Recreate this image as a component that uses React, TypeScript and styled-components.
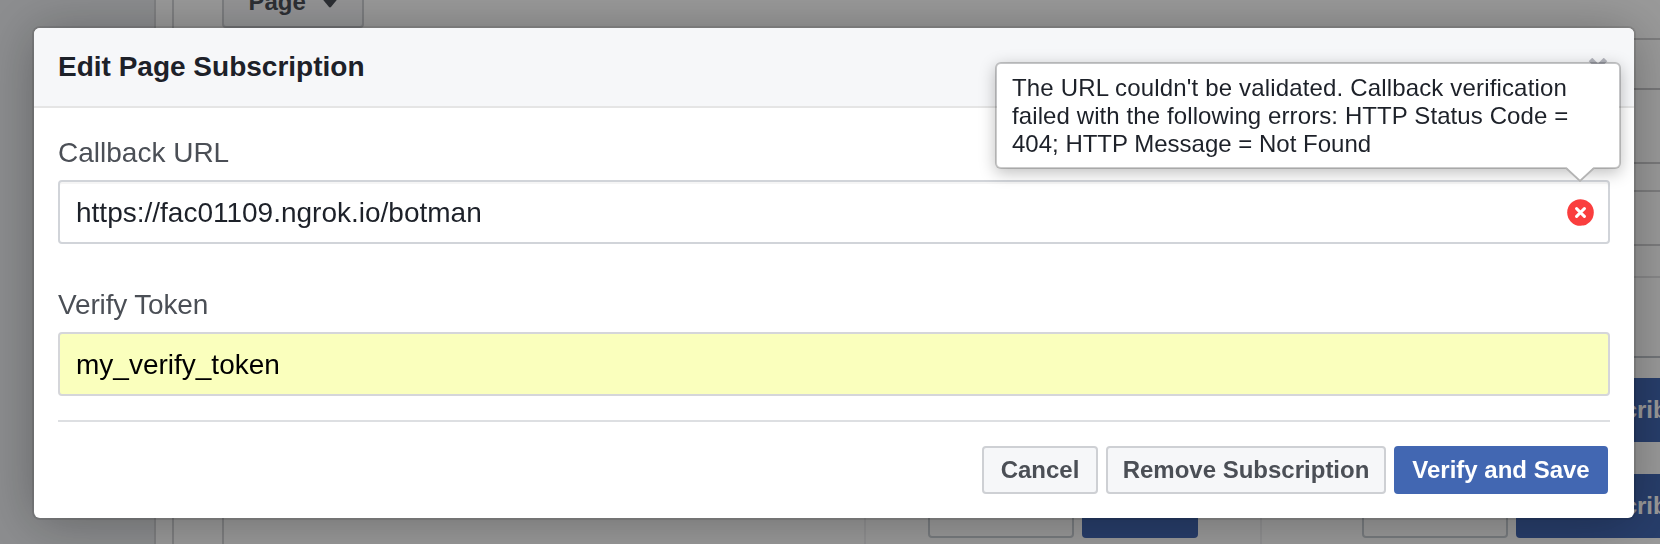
import React from "react";
import styled, { createGlobalStyle } from "styled-components";

const GlobalStyle = createGlobalStyle`
  *, *::before, *::after { box-sizing: border-box; }
  body {
    margin: 0;
    overflow: hidden;
    background: #fff;
    font-family: "Liberation Sans", Helvetica, Arial, sans-serif;
    color: #1d2129;
  }
`;

/* Page behind the dialog */

const Page = styled.div`
  display: flex;
  width: 1660px;
  height: 544px;
  overflow: hidden;
`;

const Sidebar = styled.aside`
  flex: 0 0 156px;
  background: #e9ebee;
  border-right: 2px solid #d3d4d7;
`;

const Main = styled.main`
  flex: 1;
  min-width: 0;
  margin-left: 16px;
  padding-left: 48px;
  border-left: 2px solid #d3d4d7;
`;

const Panel = styled.section`
  display: flex;
  flex-direction: column;
  height: 544px;
`;

const PanelTop = styled.div`
  flex: 0 0 38px;
`;

const ObjectSelect = styled.div`
  display: flex;
  align-items: center;
  gap: 14px;
  width: 142px;
  height: 50px;
  margin-top: -22px;
  padding: 0 0 3px 24.5px;
  border: 2px solid #ced0d4;
  border-radius: 4px;
  background: #f6f7f9;
  color: #4b4f56;
  font-size: 24px;
  font-weight: bold;
`;

const Row = styled.div<{ $height: number; $line: string }>`
  flex: 0 0 ${(p) => p.$height}px;
  display: flex;
  border-top: 2px solid ${(p) => p.$line};
  border-left: 2px solid #d3d4d7;
`;

const ButtonRow = styled.div<{ $height: number }>`
  flex: 0 0 ${(p) => p.$height}px;
  display: flex;
  border-left: 2px solid #d3d4d7;
`;

const Cell = styled.div<{ $width: number; $last?: boolean }>`
  display: flex;
  flex: 0 0 ${(p) => p.$width}px;
  justify-content: ${(p) => (p.$last ? "flex-start" : "flex-end")};
  gap: 8px;
  padding: ${(p) => (p.$last ? "0 0 0 100px" : "0 62px 0 0")};
  border-right: 2px solid #f0f0f2;
`;

const GhostSelect = styled.div`
  flex: none;
  width: 146px;
  height: 64px;
  border: 2px solid #c8ced4;
  border-radius: 4px;
`;

const SolidAction = styled.div<{ $width: number }>`
  flex: none;
  display: flex;
  align-items: center;
  width: ${(p) => p.$width}px;
  height: 64px;
  padding-left: 49px;
  border-radius: 4px;
  background: #4267b2;
  color: #fff;
  font-size: 24px;
  font-weight: bold;
`;

/* Dialog */

const Overlay = styled.div`
  position: fixed;
  inset: 0;
  display: flex;
  align-items: flex-start;
  padding: 28px 26px 0 34px;
  background: rgba(0, 0, 0, 0.4);
`;

const Dialog = styled.div`
  flex: 1;
  height: 490px;
  border-radius: 6px;
  background: #fff;
  box-shadow: 0 4px 52px rgba(0, 0, 0, 0.3), 0 0 0 2px rgba(0, 0, 0, 0.1);
`;

const DialogHeader = styled.header`
  display: flex;
  align-items: center;
  justify-content: space-between;
  height: 80px;
  padding: 0 24px;
  border-bottom: 2px solid #e5e5e5;
  border-radius: 6px 6px 0 0;
  background: #f6f7f9;
`;

const Title = styled.h1`
  margin: 0;
  font-size: 28px;
  line-height: 32px;
`;

const CloseIcon = styled.svg`
  display: block;
  margin-right: 2px;
`;

const DialogBody = styled.div`
  padding: 29px 24px 0;
`;

const Field = styled.div`
  position: relative;
  height: 152px;

  &:last-child {
    height: 124px;
  }
`;

const Label = styled.label<{ $tracking?: number }>`
  display: block;
  height: 43px;
  color: #4b4f56;
  font-size: 28px;
  line-height: 32px;
  letter-spacing: ${(p) => p.$tracking ?? 0}px;
`;

const InputBox = styled.div<{ $autofilled?: boolean }>`
  display: flex;
  align-items: center;
  justify-content: space-between;
  height: 64px;
  padding: 0 14.5px 0 16px;
  border: 2px solid ${(p) => (p.$autofilled ? "#d5d6da" : "#d1d4d9")};
  border-radius: 4px;
  background: ${(p) => (p.$autofilled ? "#faffbd" : "#fff")};
  box-shadow: ${(p) => (p.$autofilled ? "none" : "inset 0 2px 0 rgba(0, 0, 0, 0.04)")};
  color: ${(p) => (p.$autofilled ? "#000" : "#1d2129")};
  font-size: 28px;
  line-height: 32px;
`;

const Value = styled.span`
  padding-top: 2px;
`;

const ErrorIcon = styled.svg`
  display: block;
`;

const Tooltip = styled.div`
  position: absolute;
  top: -75px;
  right: -11px;
  width: 626px;
  height: 107px;
  padding: 10px 30px 0 15px;
  border: 2px solid rgba(0, 0, 0, 0.2);
  border-radius: 6px;
  background: #fff;
  background-clip: padding-box;
  box-shadow: 0 4px 16px rgba(0, 0, 0, 0.25);
  font-size: 24px;
  line-height: 28px;
  white-space: nowrap;
`;

const TooltipLine = styled.div<{ $tracking: number }>`
  letter-spacing: ${(p) => p.$tracking}px;
`;

const TooltipArrow = styled.svg`
  position: absolute;
  right: 24px;
  bottom: -15px;
`;

const DialogFooter = styled.footer`
  display: flex;
  justify-content: flex-end;
  gap: 8px;
  margin: 7px 24px 0;
  padding: 24px 2px 0 0;
  border-top: 2px solid #dddfe2;
`;

const Button = styled.button<{ $primary?: boolean; $width: number }>`
  width: ${(p) => p.$width}px;
  height: 48px;
  padding: 0;
  border: 2px solid ${(p) => (p.$primary ? "#4267b2" : "#ced0d4")};
  border-radius: 4px;
  background: ${(p) => (p.$primary ? "#4267b2" : "#f6f7f9")};
  color: ${(p) => (p.$primary ? "#fff" : "#4b4f56")};
  font: bold 24px/44px "Liberation Sans", Helvetica, Arial, sans-serif;
  white-space: nowrap;
`;

const rows = [
  { height: 50, line: "#cfcfd1" },
  { height: 74, line: "#c6c6c9" },
  { height: 28, line: "#cacacc" },
  { height: 54, line: "#cfcfd1" },
  { height: 32, line: "#cfcfd1" },
  { height: 80, line: "#e2e2e4" },
  { height: 22, line: "#bec3c9" },
];

const errorLines = [
  { text: "The URL couldn't be validated. Callback verification", tracking: 0.16 },
  { text: "failed with the following errors: HTTP Status Code =", tracking: 0.1 },
  { text: "404; HTTP Message = Not Found", tracking: 0 },
];

function SubscribeRow({ height }: { height: number }) {
  return (
    <ButtonRow $height={height}>
      <Cell $width={642} />
      <Cell $width={396}>
        <GhostSelect />
        <SolidAction $width={116} />
      </Cell>
      <Cell $width={420} $last>
        <GhostSelect />
        <SolidAction $width={200}>Subscribe</SolidAction>
      </Cell>
    </ButtonRow>
  );
}

export default function App() {
  return (
    <>
      <GlobalStyle />
      <Page>
        <Sidebar />
        <Main>
          <Panel>
            <PanelTop>
              <ObjectSelect>
                Page
                <svg width="20" height="12" viewBox="0 0 20 12">
                  <path d="M0 0h20L11.200 10.800q-1.200 1.200-2.400 0Z" fill="#4b4f56" />
                </svg>
              </ObjectSelect>
            </PanelTop>
            {rows.map((row, i) => (
              <Row key={i} $height={row.height} $line={row.line} />
            ))}
            <SubscribeRow height={96} />
            <SubscribeRow height={70} />
          </Panel>
        </Main>
      </Page>

      <Overlay>
        <Dialog role="dialog">
          <DialogHeader>
            <Title>Edit Page Subscription</Title>
            <CloseIcon width="20" height="18" viewBox="0 0 20 18">
              <path d="M2.500 1.500 17.500 16.500M17.500 1.500 2.500 16.500" stroke="#b4b6be" strokeWidth="5" />
            </CloseIcon>
          </DialogHeader>
          <DialogBody>
            <Field>
              <Label>Callback URL</Label>
              <InputBox>
                <Value>https://fac01109.ngrok.io/botman</Value>
                <ErrorIcon width="27" height="27" viewBox="0 0 27 27">
                  <circle cx="13.5" cy="13.5" r="13.3" fill="#fa3e3e" />
                  <path d="M9.600 9.600 17.400 17.400M17.400 9.600 9.600 17.400" stroke="#fff" strokeWidth="3" strokeLinecap="round" />
                </ErrorIcon>
              </InputBox>
              <Tooltip>
                {errorLines.map((line) => (
                  <TooltipLine key={line.text} $tracking={line.tracking}>
                    {line.text}
                  </TooltipLine>
                ))}
                <TooltipArrow width="30" height="15" viewBox="0 0 30 15">
                  <path d="M1 0 15 14 29 0Z" fill="#fff" />
                  <path d="M1 1 15 14 29 1" fill="none" stroke="#b4b4b4" strokeWidth="1.8" />
                </TooltipArrow>
              </Tooltip>
            </Field>
            <Field>
              <Label $tracking={-0.15}>Verify Token</Label>
              <InputBox $autofilled>
                <Value>my_verify_token</Value>
              </InputBox>
            </Field>
          </DialogBody>
          <DialogFooter>
            <Button $width={116}>Cancel</Button>
            <Button $width={280}>Remove Subscription</Button>
            <Button $width={214} $primary>
              Verify and Save
            </Button>
          </DialogFooter>
        </Dialog>
      </Overlay>
    </>
  );
}
